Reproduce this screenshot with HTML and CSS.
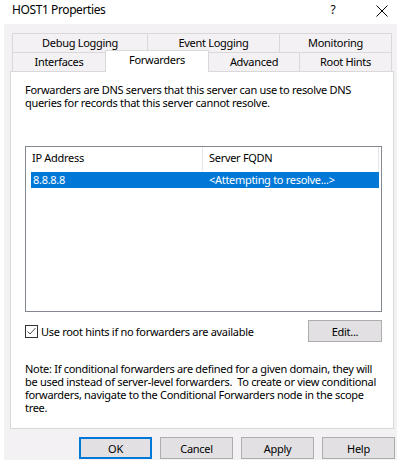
FILE: index.html
```html
<!DOCTYPE html>
<html>
<head>
<meta charset="utf-8">
<title>HOST1 Properties</title>
<link rel="stylesheet" href="styles.css">
</head>
<body>
<div class="window">
  <div class="titlebar">
    <span class="title">HOST1 Properties</span>
    <span class="help">?</span>
    <span class="close"><svg width="12" height="12" viewBox="0 0 12 12"><path d="M0.5 0.5 L11.5 11.5 M11.5 0.5 L0.5 11.5" stroke="#000" stroke-width="1" fill="none"/></svg></span>
  </div>
  <div class="dialog">
    <div class="tabs">
      <div class="tabrow back">
        <div class="tab w-debug">Debug Logging</div>
        <div class="tab w-event">Event Logging</div>
        <div class="tab w-mon">Monitoring</div>
      </div>
      <div class="tabrow front">
        <div class="tab w-if">Interfaces</div>
        <div class="tab selected w-fwd">Forwarders</div>
        <div class="tab w-adv">Advanced</div>
        <div class="tab w-root">Root Hints</div>
      </div>
    </div>
    <div class="panel">
      <p class="intro">Forwarders are DNS servers that this server can use to resolve DNS<br>queries for records that this server cannot resolve.</p>
      <div class="listview">
        <div class="lv-header">
          <div class="hcol c1">IP Address</div>
          <div class="hcol c2">Server FQDN</div>
        </div>
        <div class="lv-row selected">
          <div class="cell c1">8.8.8.8</div>
          <div class="cell c2">&lt;Attempting to resolve...&gt;</div>
        </div>
      </div>
      <div class="options">
        <label class="check"><span class="box"><svg width="13" height="13" viewBox="0 0 13 13"><rect x="0.5" y="0.5" width="12" height="12" fill="#fff" stroke="#333"/><path d="M2.5 6.5 L5 9 L10.5 3" stroke="#555" stroke-width="1" fill="none"/></svg></span>Use root hints if no forwarders are available</label>
        <button class="btn edit">Edit...</button>
      </div>
      <p class="note">Note: If conditional forwarders are defined for a given domain, they will<br>be used instead of server-level forwarders.&nbsp; To create or view conditional<br>forwarders, navigate to the Conditional Forwarders node in the scope<br>tree.</p>
    </div>
    <div class="buttons">
      <button class="btn default">OK</button>
      <button class="btn">Cancel</button>
      <button class="btn">Apply</button>
      <button class="btn">Help</button>
    </div>
  </div>
</div>
</body>
</html>
```
FILE: styles.css
```css
* { box-sizing: border-box; }
html, body { margin: 0; padding: 0; background: #fff; }
body {
  font-family: "Noto Sans", "Open Sans", sans-serif;
  font-size: 11px;
  letter-spacing: -0.3px;
  color: #000;
  width: 410px;
  height: 468px;
  overflow: hidden;
}
.titlebar {
  height: 24px;
  display: flex;
  align-items: flex-start;
  padding: 2px 0 0 12px;
  line-height: 16px;
}
.title { flex: 1; font-size: 12px; letter-spacing: -0.4px; }
.help { width: 10px; text-align: center; margin-right: 38px; font-size: 12px; }
.close { margin-right: 22px; padding-top: 3px; line-height: 0; }

.dialog {
  margin-left: 4px;
  width: 393px;
  background: #f4f1f4;
  padding: 9px 3px 1px 6px;
}
.tabs { margin-left: 2px; }
.tabrow { display: flex; align-items: flex-start; }
.tab {
  height: 19px;
  border: 1px solid #d9d9d9;
  border-bottom: 0;
  margin-left: -1px;
  text-align: center;
  line-height: 18px;
  background: #f4f1f4;
  white-space: nowrap;
}
.tab:first-child { margin-left: 0; }
.w-debug { width: 136px; }
.w-event { width: 133px; }
.w-mon { width: 113px; }
.w-if { width: 94px; }
.w-fwd { width: 104px; }
.w-adv { width: 92px; }
.w-root { width: 93px; }
.tab.selected {
  height: 22px;
  margin-top: -2px;
  margin-bottom: -1px;
  background: #fff;
  position: relative;
  z-index: 1;
  line-height: 17px;
}

.panel {
  width: 384px;
  height: 358px;
  background: #fff;
  border: 1px solid #d9d9d9;
  padding: 0 11px 0 14px;
}
.intro { margin: 11px 0 0; line-height: 13px; white-space: nowrap; }
.listview {
  margin-top: 37px;
  width: 357px;
  height: 166px;
  border: 1px solid #828790;
  padding: 0 2px 0 5px;
}
.lv-header { display: flex; height: 24px; }
.hcol {
  line-height: 22px;
  border-right: 1px solid #e5e5e5;
  white-space: nowrap;
}
.c1 { width: 172px; padding-left: 1px; }
.c2 { width: 176px; padding-left: 6px; }
.lv-row { display: flex; height: 16px; margin-top: 1px; line-height: 16px; }
.lv-row.selected { background: #0078d7; color: #fff; }
.cell { white-space: nowrap; }
.lv-row .c1 { padding-left: 2px; }

.options {
  margin-top: 8px;
  height: 22px;
  display: flex;
  justify-content: space-between;
  align-items: center;
}
.check { display: flex; align-items: center; white-space: nowrap; }
.box { width: 13px; height: 13px; margin-right: 3px; line-height: 0; }

.btn {
  font-family: inherit;
  font-size: 11px;
  letter-spacing: inherit;
  color: #000;
  background: #e3e0e3;
  border: 1px solid #adadad;
  width: 73px;
  height: 22px;
  padding: 0;
  margin: 0;
}
.edit { width: 74px; }
.note { margin: 20px 0 0; line-height: 13px; white-space: nowrap; }

.buttons {
  margin-top: 8px;
  margin-right: -1px;
  display: flex;
  justify-content: flex-end;
  gap: 8px;
}
.btn.default { border: 2px solid #0078d7; }
```
